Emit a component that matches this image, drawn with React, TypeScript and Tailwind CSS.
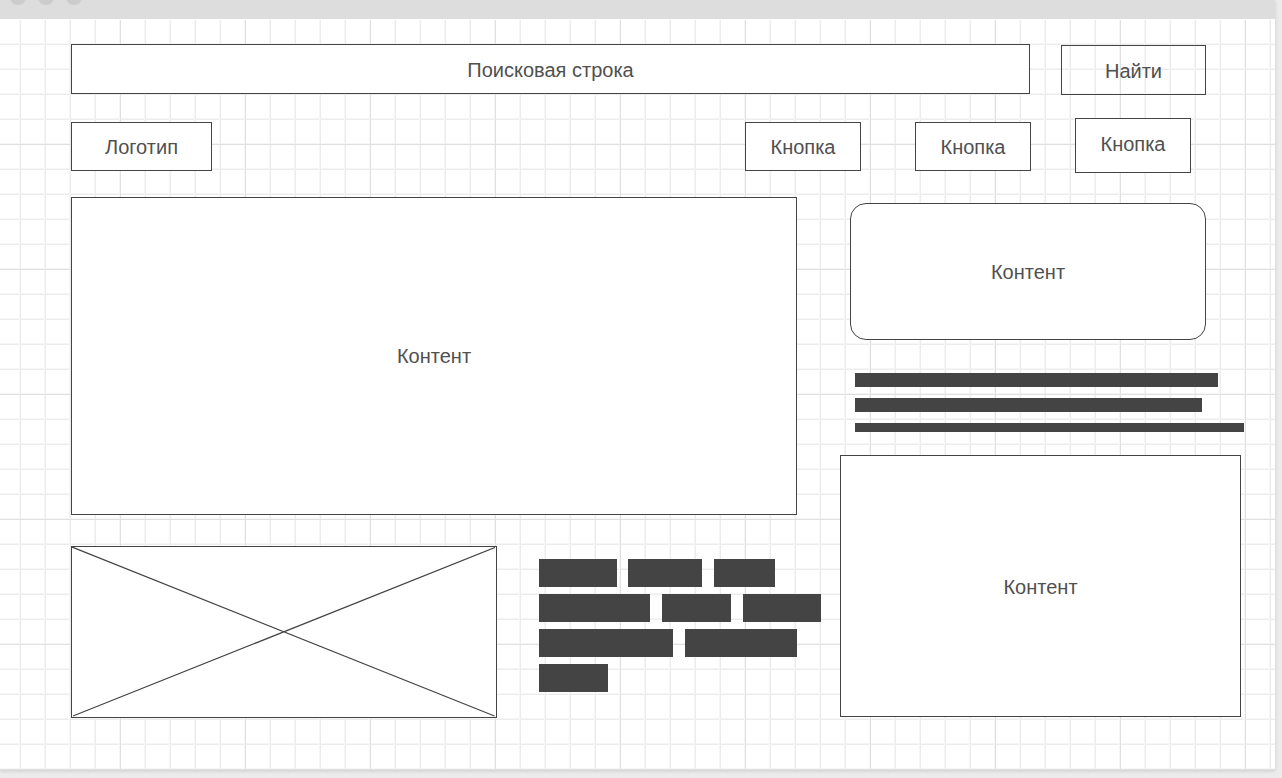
import type { ReactNode } from 'react';

const frame = 'flex items-center justify-center border border-[#444444] text-xl leading-6 text-[#505050]';

function Panel({ className, children }: { className: string; children: ReactNode }) {
  return <section className={`${frame} bg-white ${className}`}>{children}</section>;
}

const words = [
  ['w-[78px] mr-[11px]', 'w-[74px] mr-3', 'w-[61px]'],
  ['w-[111px] mr-3', 'w-[69px] mr-3', 'w-[78px]'],
  ['w-[134px] mr-3', 'w-28'],
  ['w-[69px]'],
];

export default function App() {
  return (
    <div className="flex min-h-screen flex-col bg-[#ececec] font-['Liberation_Sans',sans-serif] text-[#505050]">
      <div className="mr-[7px] mb-2 flex flex-1 flex-col shadow-[0_1px_4px_rgba(0,0,0,0.14)]">
        <header className="h-[19px] overflow-hidden bg-[#dddddd]">
          <div className="-mt-[11px] flex gap-3 pl-[10px]">
            <span className="size-4 rounded-full bg-[#cccccc]" />
            <span className="size-4 rounded-full bg-[#cccccc]" />
            <span className="size-4 rounded-full bg-[#cccccc]" />
          </div>
        </header>

        <main className="flex-1 border-t border-white bg-white bg-[linear-gradient(to_right,#e0e0e0_1px,transparent_1px),linear-gradient(to_bottom,#e0e0e0_1px,transparent_1px),linear-gradient(to_right,#ececec_1px,transparent_1px,transparent_24px,#f6f6f6_24px),linear-gradient(to_bottom,#ececec_1px,transparent_1px,transparent_24px,#f6f6f6_24px)] bg-[size:125px_125px,125px_125px,25px_25px,25px_25px] bg-[position:-5px_-1px,-5px_-1px,-5px_-1px,-5px_-1px] pb-[51px] pl-[71px]">
          <form className="flex items-start gap-[31px] pt-6 pr-[69px]" onSubmit={(e) => e.preventDefault()}>
            <input
              type="text"
              aria-label="Поисковая строка"
              placeholder="Поисковая строка"
              className="h-[50px] min-w-0 flex-1 border border-[#444444] bg-white pt-[2px] text-center text-xl leading-6 outline-none placeholder:text-[#505050] placeholder:opacity-100"
            />
            <button type="submit" className={`${frame} mt-px h-[50px] w-[145px] pt-[2px]`}>
              Найти
            </button>
          </form>

          <nav className="mt-[23px] flex items-start pr-[84px]">
            <a href="#home" className={`${frame} mt-1 h-[49px] w-[141px] bg-white`}>
              Логотип
            </a>
            <button type="button" className={`${frame} mt-1 ml-auto h-[49px] w-[116px] bg-white`}>
              Кнопка
            </button>
            <button type="button" className={`${frame} mt-1 ml-[54px] h-[49px] w-[116px] bg-white`}>
              Кнопка
            </button>
            <button type="button" className={`${frame} ml-11 h-[55px] w-[116px] bg-white pb-[3px]`}>
              Кнопка
            </button>
          </nav>

          <div className="mt-6 flex items-start pr-[31px]">
            <div className="min-w-0 flex-1">
              <Panel className="mr-[43px] h-[318px]">Контент</Panel>
              <div className="mt-[31px] flex items-start gap-[42px]">
                <div className="h-[172px] w-[426px] border border-[#444444] bg-white">
                  <svg viewBox="0 0 424 170" className="block size-full" role="img" aria-label="Изображение">
                    <path d="M0 0 422.5 169M1 169 423 0.5" stroke="#444444" strokeWidth="1.25" fill="none" />
                  </svg>
                </div>
                <div className="mt-[13px] flex flex-col gap-[7px]">
                  {words.map((row, i) => (
                    <div key={i} className="flex">
                      {row.map((size, j) => (
                        <span key={j} className={`h-7 bg-[#444444] ${size}`} />
                      ))}
                    </div>
                  ))}
                </div>
              </div>
            </div>

            <aside className="w-[404px] pt-[6px]">
              <Panel className="ml-[10px] h-[137px] w-[356px] rounded-2xl">Контент</Panel>
              <div className="mt-[33px] ml-[15px] flex flex-col gap-[11px]">
                <div className="h-[14px] w-[363px] bg-[#444444]" />
                <div className="h-[14px] w-[347px] bg-[#444444]" />
                <div className="h-[9px] w-[389px] bg-[#444444]" />
              </div>
              <Panel className="mt-[23px] h-[262px] w-[401px] pt-[2px]">Контент</Panel>
            </aside>
          </div>
        </main>
      </div>
    </div>
  );
}
